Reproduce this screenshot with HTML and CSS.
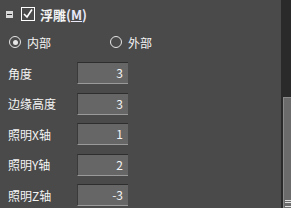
FILE: index.html
```html
<!DOCTYPE html>
<html lang="zh-CN">
<head>
  <meta charset="UTF-8">
  <title>浮雕</title>
  <link rel="stylesheet" href="styles.css">
</head>
<body>
  <div class="panel">
    <div class="content">
      <div class="group-head">
        <span class="collapse"></span>
        <span class="check">
          <svg width="14" height="14" viewBox="0 0 14 14">
            <rect x="0.5" y="0.5" width="13" height="13" fill="none" stroke="#fff" stroke-width="1"/>
            <path d="M3 7 L6 10 L11 2.5" fill="none" stroke="#fff" stroke-width="1.6"/>
          </svg>
        </span>
        <span class="title">浮雕<span class="key">(<u>M</u>)</span></span>
      </div>

      <div class="radios">
        <label class="radio on"><span class="dot"></span>内部</label>
        <label class="radio"><span class="dot"></span>外部</label>
      </div>

      <div class="fields">
        <div class="field"><span class="name">角度</span><span class="box">3</span></div>
        <div class="field"><span class="name">边缘高度</span><span class="box">3</span></div>
        <div class="field"><span class="name">照明X轴</span><span class="box">1</span></div>
        <div class="field"><span class="name">照明Y轴</span><span class="box">2</span></div>
        <div class="field"><span class="name">照明Z轴</span><span class="box">-3</span></div>
      </div>
    </div>

    <div class="scrollbar">
      <div class="thumb"><span class="grip"></span></div>
    </div>
  </div>
</body>
</html>
```

FILE: styles.css
```css
body {
  margin: 0;
  background: #4a4a4a;
  font-family: "Noto Sans CJK SC", "Noto Sans", sans-serif;
  font-size: 12px;
  color: #f4f4f4;
}

.panel {
  display: flex;
  width: 291px;
  height: 208px;
  overflow: hidden;
}

.content {
  flex: 1;
}

.group-head {
  display: flex;
  align-items: center;
  height: 14px;
  padding: 7px 0 0 6px;
}

.collapse {
  position: relative;
  width: 7px;
  height: 7px;
  background: #d8d8d8;
  margin-right: 8px;
}

.collapse::after {
  content: "";
  position: absolute;
  left: 1px;
  top: 3px;
  width: 5px;
  height: 1px;
  background: #333;
}

.check {
  display: flex;
  margin-right: 5px;
}

.title {
  font-weight: bold;
  font-size: 13px;
}

.key {
  color: #e8e8f8;
}

.radios {
  display: flex;
  align-items: center;
  height: 16px;
  margin: 13px 0 0 9px;
}

.radio {
  display: flex;
  align-items: center;
  width: 101px;
}

.dot {
  width: 10px;
  height: 10px;
  border: 1.5px solid #e6e6e6;
  border-radius: 50%;
  margin-right: 6px;
  position: relative;
}

.radio.on .dot::after {
  content: "";
  position: absolute;
  left: 2.5px;
  top: 2.5px;
  width: 5px;
  height: 5px;
  border-radius: 50%;
  background: #e6e6e6;
}

.fields {
  display: flex;
  flex-direction: column;
  gap: 8.5px;
  padding: 12px 0 0 8px;
}

.field {
  display: flex;
  align-items: center;
  height: 22px;
}

.name {
  width: 69px;
}

.box {
  box-sizing: border-box;
  width: 51px;
  height: 22px;
  background: #666;
  border-top: 1px solid #2e2e2e;
  border-left: 1px solid #3a3a3a;
  border-bottom: 1px solid #9a9a9a;
  text-align: right;
  padding-right: 5px;
  line-height: 20px;
}

.scrollbar {
  width: 10px;
  background: #2a2a2a;
  display: flex;
  flex-direction: column;
  justify-content: flex-end;
}

.thumb {
  margin-left: 2px;
  height: 110px;
  background: #6b6b6b;
  border-top: 1px solid #8a8a8a;
  border-left: 1px solid #8a8a8a;
  position: relative;
}

.grip {
  position: absolute;
  left: 1px;
  right: 0;
  bottom: 1px;
  height: 5px;
  border-top: 1px solid #ddd;
  border-bottom: 1px solid #ddd;
}

.grip::after {
  content: "";
  position: absolute;
  left: 0;
  right: 0;
  top: 1px;
  height: 1px;
  background: #ddd;
}
```
